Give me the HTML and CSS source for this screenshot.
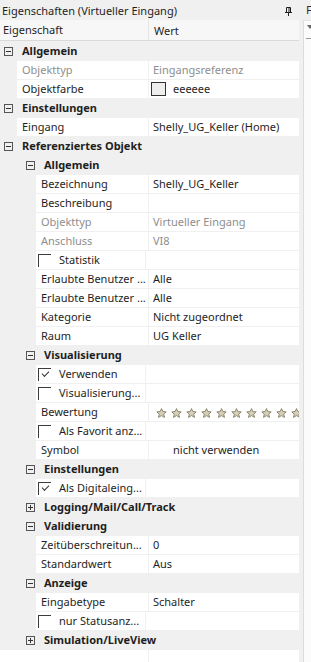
FILE: index.html
```html
<!DOCTYPE html>
<html lang="de">
<head>
  <meta charset="UTF-8" />
  <title>Eigenschaften (Virtueller Eingang)</title>
  <link rel="stylesheet" href="styles.css">
</head>
<body>
  <div class="window">
    <div class="panel">
      <div class="title">
        <span>Eigenschaften (Virtueller Eingang)</span>
        <svg class="pin" width="7" height="9" viewBox="0 0 7 9">
          <path d="M1.5 0.5h4v5h-4z M0 5.5h7 M3.5 5.5v3.5" fill="none" stroke="#1e1e1e" stroke-width="1"/>
          <path d="M4 1v4.5" stroke="#1e1e1e" stroke-width="1"/>
        </svg>
      </div>
      <div class="head">
        <div class="hname">Eigenschaft</div>
        <div class="hval">Wert</div>
      </div>

      <div class="rows">
        <div class="cat l1"><span class="exp minus"></span>Allgemein</div>
        <div class="prop l1"><div class="name dim">Objekttyp</div><div class="val dim">Eingangsreferenz</div></div>
        <div class="prop l1"><div class="name">Objektfarbe</div><div class="val"><span class="swatch"></span>eeeeee</div></div>
        <div class="cat l1"><span class="exp minus"></span>Einstellungen</div>
        <div class="prop l1"><div class="name">Eingang</div><div class="val">Shelly_UG_Keller (Home)</div></div>
        <div class="cat l1"><span class="exp minus"></span>Referenziertes Objekt</div>

        <div class="cat l2"><span class="exp minus"></span>Allgemein</div>
        <div class="prop l2"><div class="name">Bezeichnung</div><div class="val">Shelly_UG_Keller</div></div>
        <div class="prop l2"><div class="name">Beschreibung</div><div class="val"></div></div>
        <div class="prop l2"><div class="name dim">Objekttyp</div><div class="val dim">Virtueller Eingang</div></div>
        <div class="prop l2"><div class="name dim">Anschluss</div><div class="val dim">VI8</div></div>
        <div class="prop l2"><div class="name check"><span class="box"></span>Statistik</div><div class="val"></div></div>
        <div class="prop l2"><div class="name">Erlaubte Benutzer ...</div><div class="val">Alle</div></div>
        <div class="prop l2"><div class="name">Erlaubte Benutzer ...</div><div class="val">Alle</div></div>
        <div class="prop l2"><div class="name">Kategorie</div><div class="val">Nicht zugeordnet</div></div>
        <div class="prop l2"><div class="name">Raum</div><div class="val">UG Keller</div></div>

        <div class="cat l2"><span class="exp minus"></span>Visualisierung</div>
        <div class="prop l2"><div class="name check"><span class="box on"></span>Verwenden</div><div class="val"></div></div>
        <div class="prop l2"><div class="name check"><span class="box"></span>Visualisierung...</div><div class="val"></div></div>
        <div class="prop l2"><div class="name">Bewertung</div><div class="val stars" id="stars"></div></div>
        <div class="prop l2"><div class="name check"><span class="box"></span>Als Favorit anz...</div><div class="val"></div></div>
        <div class="prop l2"><div class="name">Symbol</div><div class="val sym">nicht verwenden</div></div>

        <div class="cat l2"><span class="exp minus"></span>Einstellungen</div>
        <div class="prop l2"><div class="name check"><span class="box on"></span>Als Digitaleing...</div><div class="val"></div></div>
        <div class="cat l2"><span class="exp plus"></span>Logging/Mail/Call/Track</div>
        <div class="cat l2"><span class="exp minus"></span>Validierung</div>
        <div class="prop l2"><div class="name">Zeitüberschreitun...</div><div class="val">0</div></div>
        <div class="prop l2"><div class="name">Standardwert</div><div class="val">Aus</div></div>
        <div class="cat l2"><span class="exp minus"></span>Anzeige</div>
        <div class="prop l2"><div class="name">Eingabetype</div><div class="val">Schalter</div></div>
        <div class="prop l2"><div class="name check"><span class="box"></span>nur Statusanz...</div><div class="val"></div></div>
        <div class="cat l2"><span class="exp plus"></span>Simulation/LiveView</div>
      </div>

      <div class="filler">
        <div class="fname"></div>
        <div class="fval"></div>
      </div>
    </div>

    <div class="side">
      <div class="stitle">F</div>
      <div class="sbody">
        <div class="sdrop"></div>
      </div>
    </div>
  </div>

  <script>
    // ten rating stars, the last one cut off by the cell
    const star = '<svg width="11" height="10" viewBox="0 0 11 10"><path d="M5.5 0.6l1.4 3 3.3 0.3-2.5 2.2 0.8 3.3-3-1.8-3 1.8 0.8-3.3L0.8 3.9l3.3-0.3z" fill="#d6d0ba" stroke="#857d64" stroke-width="0.9" stroke-linejoin="round"/></svg>';
    document.getElementById("stars").innerHTML = star.repeat(10);
  </script>
</body>
</html>
```

FILE: styles.css
```css
html, body {
  margin: 0;
  padding: 0;
}
body {
  width: 311px;
  height: 662px;
  overflow: hidden;
  font-family: "Noto Sans", sans-serif;
  font-size: 11px;
  color: #1e1e1e;
  background: #f0f0f0;
}
.window {
  display: flex;
  height: 662px;
}
.panel {
  width: 303px;
  display: flex;
  flex-direction: column;
  background: #f0f0f0;
}
.title {
  height: 20px;
  display: flex;
  align-items: center;
  justify-content: space-between;
  padding: 0 11px 0 2px;
  font-size: 11px;
}
.pin {
  margin-top: 2px;
}
.head {
  height: 20px;
  margin-right: 4px;
  display: flex;
  align-items: center;
  background: #f7f7f7;
  border-bottom: 1px solid #dadada;
}
.hname {
  width: 145px;
  padding-left: 3px;
  border-right: 1px solid #e4e4e4;
  line-height: 20px;
}
.hval {
  padding-left: 5px;
}
.rows {
  display: flex;
  flex-direction: column;
  gap: 1px;
  padding: 1px 4px 0 0;
}
.cat, .prop {
  height: 18px;
  line-height: 18px;
  display: flex;
  white-space: nowrap;
}
.cat {
  font-weight: bold;
  align-items: center;
}
.cat.l1 {
  padding-left: 4px;
}
.cat.l2 {
  padding-left: 26px;
}
.exp {
  width: 7px;
  height: 7px;
  border: 1px solid #555;
  margin-right: 9px;
  position: relative;
  box-sizing: content-box;
}
.exp::before, .exp.plus::after {
  content: "";
  position: absolute;
  background: #333;
}
.exp::before {
  left: 1px;
  top: 3px;
  width: 5px;
  height: 1px;
}
.exp.plus::after {
  left: 3px;
  top: 1px;
  width: 1px;
  height: 5px;
}
.prop.l1 {
  padding-left: 17px;
}
.prop.l2 {
  padding-left: 36px;
}
.name {
  width: 0;
  flex: 0 0 auto;
  background: #fff;
  padding-left: 5px;
  overflow: hidden;
}
.prop.l1 .name {
  width: 126px;
}
.prop.l2 .name {
  width: 107px;
}
.val {
  flex: 1;
  margin-left: 1px;
  background: #fff;
  padding-left: 4px;
  overflow: hidden;
  display: flex;
  align-items: center;
}
.dim {
  color: #8e8e8e;
}
.swatch {
  width: 13px;
  height: 12px;
  border: 1px solid #333;
  background: #eeeeee;
  margin: 0 7px 0 -2px;
}
.check {
  display: flex;
  align-items: center;
  padding-left: 2px;
}
.box {
  width: 13px;
  height: 13px;
  box-sizing: border-box;
  border-left: 1px solid #3c3c3c;
  border-top: 1px solid #3c3c3c;
  margin-right: 8px;
  position: relative;
}
.box.on::after {
  content: "";
  position: absolute;
  left: 3px;
  top: 2px;
  width: 6px;
  height: 3px;
  border-left: 1px solid #333;
  border-bottom: 1px solid #333;
  transform: rotate(-45deg);
}
.stars {
  padding-left: 7px;
  gap: 4px;
}
.stars svg {
  flex: 0 0 auto;
  margin-top: 1px;
}
.sym {
  padding-left: 24px;
}
.filler {
  flex: 1;
  margin-top: 1px;
  margin-right: 4px;
  display: flex;
}
.fname {
  width: 148px;
  background: #fff;
}
.fval {
  flex: 1;
  margin-left: 1px;
  background: #fff;
}
.side {
  flex: 1;
  display: flex;
  flex-direction: column;
  overflow: hidden;
}
.stitle {
  height: 20px;
  line-height: 20px;
  padding-left: 3px;
  font-size: 11.5px;
  color: #3a2a30;
}
.sbody {
  flex: 1;
  background: #fbfbfb;
  border-left: 1px solid #dcdcdc;
  border-top: 1px solid #e6e6e6;
  padding: 3px 0 0 2px;
}
.sdrop {
  height: 14px;
  border-bottom: 1px solid #9a9a9a;
  position: relative;
}
.sdrop::before {
  content: "";
  position: absolute;
  left: 1px;
  top: 1px;
  border-left: 3px solid transparent;
  border-right: 3px solid transparent;
  border-top: 4px solid #6a6a6a;
}
```
